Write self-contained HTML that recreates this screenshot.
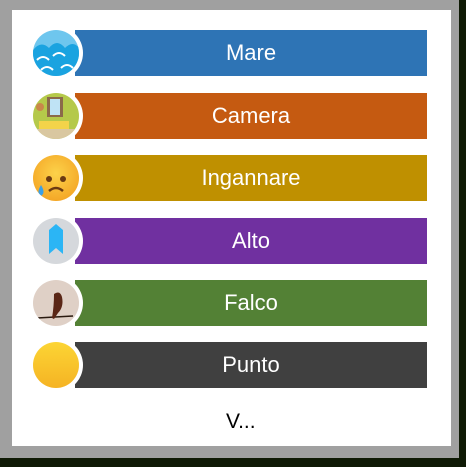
<!DOCTYPE html>
<html><head><style>
body{margin:0;width:466px;height:467px;background:#0f1a05;position:relative;overflow:hidden;font-family:"Liberation Sans",sans-serif}
#g{position:absolute;left:0;top:0;width:459px;height:458px;background:#a0a0a0}
#w{position:absolute;left:12px;top:10px;width:439px;height:436px;background:#fff}
.bar{position:absolute;left:75px;width:352px;height:46px;color:#fff;font-size:22px;text-align:center;line-height:46px}
.bar span{margin-left:0px}
.hole{position:absolute;left:29px;width:54px;height:54px;border-radius:50%;background:#fff}
.ic{position:absolute;left:33px;width:46px;height:46px;border-radius:50%;overflow:hidden}
</style></head><body>
<div id="g"></div><div id="w"></div>

<div class="bar" style="top:30px;background:#2e74b5">Mare</div>
<div class="bar" style="top:93px;background:#c55a11">Camera</div>
<div class="bar" style="top:155px;background:#bf9000">Ingannare</div>
<div class="bar" style="top:218px;background:#7030a0">Alto</div>
<div class="bar" style="top:280px;background:#538135">Falco</div>
<div class="bar" style="top:342px;background:#404040">Punto</div>

<div class="hole" style="top:26px"></div>
<div class="hole" style="top:89px"></div>
<div class="hole" style="top:151px"></div>
<div class="hole" style="top:214px"></div>
<div class="hole" style="top:276px"></div>
<div class="hole" style="top:338px"></div>

<div class="ic" style="top:30px;background:#6ec6ee">
<svg width="46" height="46"><path d="M0 20 q8-10 16-2 q8-10 16 0 q8-8 14 0 V46 H0Z" fill="#1aa3e0"/><path d="M4 30 q6-6 12 0 M20 26 q6-6 12 0 M8 40 q6-6 12 0 M28 38 q6-6 12 0" stroke="#fff" stroke-width="2" fill="none"/></svg></div>
<div class="ic" style="top:93px;background:#b5c94a">
<svg width="46" height="46"><rect x="14" y="4" width="16" height="20" fill="#8b6a4a"/><rect x="17" y="6" width="10" height="16" fill="#bfe3f5"/><rect x="6" y="28" width="30" height="8" fill="#f3d34a"/><rect x="0" y="36" width="46" height="10" fill="#d9c7a0"/><circle cx="7" cy="14" r="4" fill="#c9884a"/></svg></div>
<div class="ic" style="top:155px;background:radial-gradient(circle at 50% 40%,#fcd24a,#f29a1c)">
<svg width="46" height="46"><circle cx="16" cy="24" r="3" fill="#6b3a12"/><circle cx="30" cy="24" r="3" fill="#6b3a12"/><path d="M16 36 q7-6 14 0" stroke="#6b3a12" stroke-width="2.5" fill="none"/><path d="M8 30 q-5 8 0 11 q5-3 0-11Z" fill="#3aa0e8"/></svg></div>
<div class="ic" style="top:218px;background:#d5d8dc">
<svg width="46" height="46"><path d="M16 12 L23 6 L30 12 V36 L23 30 L16 36Z" fill="#2bb5f5"/></svg></div>
<div class="ic" style="top:280px;background:#dfd0c6">
<svg width="46" height="46"><path d="M4 38 L40 36" stroke="#2a1a10" stroke-width="1.5"/><path d="M21 14 q6-4 8 3 q2 10-4 16 l-4 6 l-2-1 q2-12 2-24Z" fill="#5a2616"/></svg></div>
<div class="ic" style="top:342px;background:linear-gradient(#fcd534,#f5b324)"></div>

<div style="position:absolute;left:226px;top:410px;font-size:21px;color:#000">V...</div>
</body></html>
